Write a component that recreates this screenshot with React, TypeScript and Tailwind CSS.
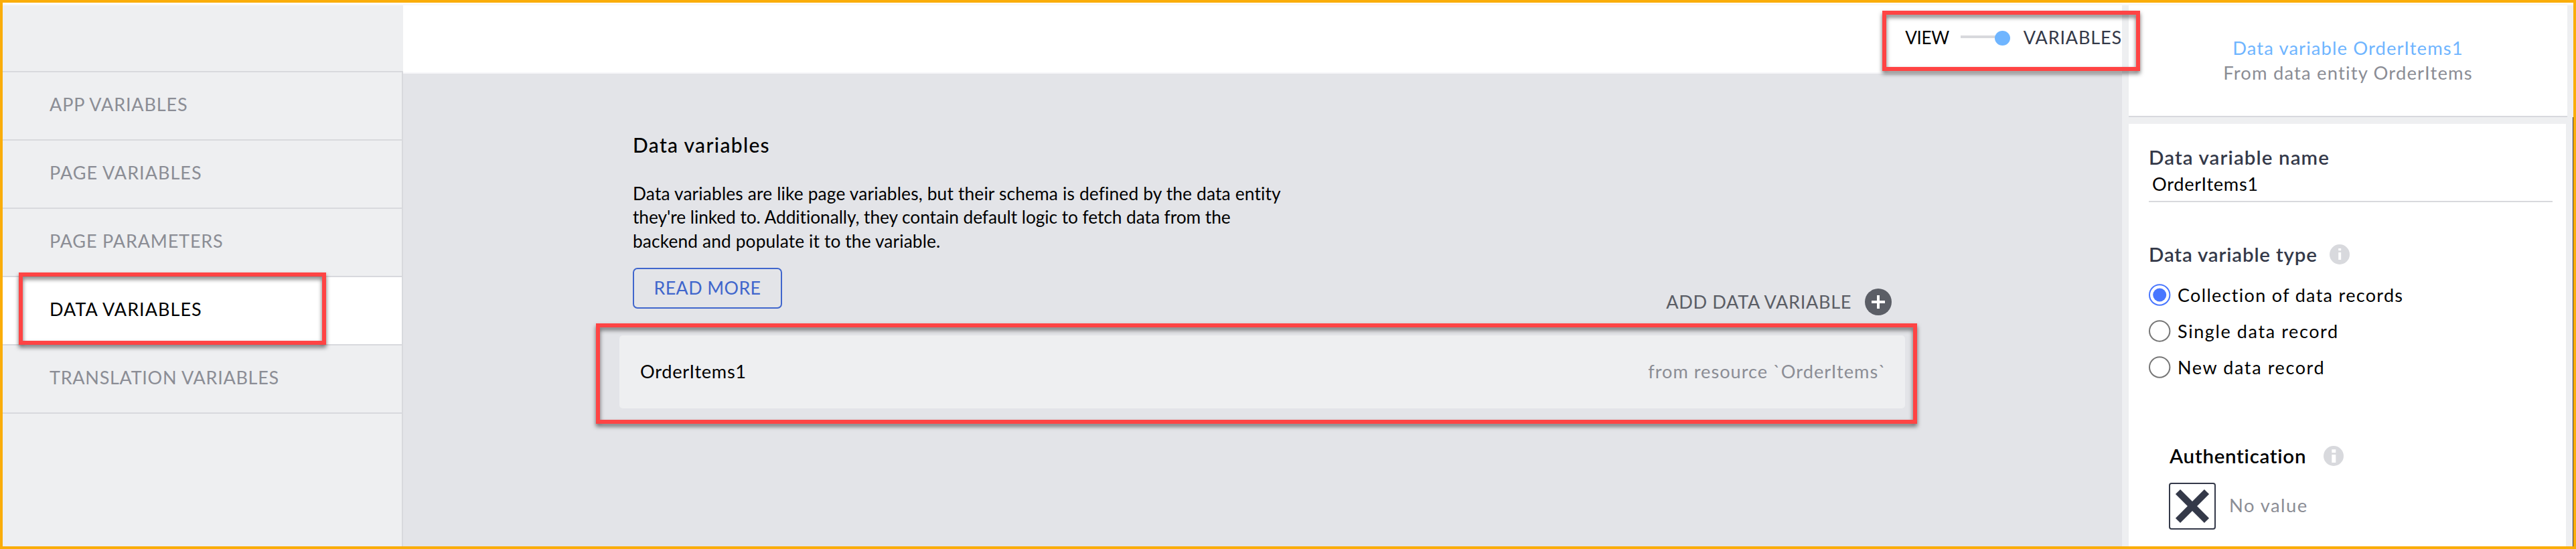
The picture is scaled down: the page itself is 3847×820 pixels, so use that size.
type NavItem = { label: string; spacing: string; active?: boolean };

const NAV: NavItem[] = [
  { label: "APP VARIABLES", spacing: "tracking-[0.86px]" },
  { label: "PAGE VARIABLES", spacing: "tracking-[1.02px]" },
  { label: "PAGE PARAMETERS", spacing: "tracking-[0.84px]" },
  { label: "DATA VARIABLES", spacing: "tracking-[1.04px]", active: true },
  { label: "TRANSLATION VARIABLES", spacing: "tracking-[0.72px]" },
];

const TYPES = [
  { label: "Collection of data records", spacing: "tracking-[1.31px]", checked: true },
  { label: "Single data record", spacing: "tracking-[1.6px]", checked: false },
  { label: "New data record", spacing: "tracking-[1.6px]", checked: false },
];

function InfoIcon({ bold = false }: { bold?: boolean }) {
  return (
    <svg width="30" height="30" viewBox="0 0 30 30" className="shrink-0">
      <circle cx="15" cy="15" r="15" fill="#d8d9dd" />
      {bold ? (
        <path d="M12.300 5.300h6v5h-6zM12.300 13h6v12h-6z" fill="#fff" />
      ) : (
        <path d="M13.200 6h4v3.300h-4zM13.200 12h4v11h-4z" fill="#fff" />
      )}
    </svg>
  );
}

function Radio({ checked }: { checked: boolean }) {
  return (
    <svg width="33" height="33" viewBox="0 0 33 33" className="shrink-0">
      <circle cx="16.2" cy="16.5" r="15.2" fill="#fff" stroke={checked ? "#4876ff" : "#767676"} strokeWidth="2" />
      {checked && <circle cx="16.2" cy="16.5" r="10" fill="#4876ff" />}
    </svg>
  );
}

function Highlight({ className }: { className: string }) {
  return (
    <div
      className={`pointer-events-none absolute border-[6px] border-[#ff4444] drop-shadow-[0_4px_3px_rgba(0,0,0,0.55)] ${className}`}
    />
  );
}

function Sidebar() {
  return (
    <aside className="flex w-[598px] shrink-0 flex-col bg-[#eeeff1]">
      <div className="h-[98px]" />
      <nav className="flex grow flex-col border-r-2 border-[#d8d9dd]">
        {NAV.map((n) => (
          <div
            key={n.label}
            className={`flex h-[102px] items-center border-t-2 border-[#d8d9dd] pb-1 pl-[70px] text-[27px] leading-9 ${n.spacing} ${
              n.active ? "bg-white text-black" : "text-[#8b8d95]"
            }`}
          >
            {n.label}
          </div>
        ))}
        <div className="border-t-2 border-[#d8d9dd]" />
      </nav>
    </aside>
  );
}

function Main() {
  return (
    <main className="flex w-[2567px] shrink-0 flex-col bg-[#e3e4e8]">
      <header className="flex h-[102px] items-start justify-end border-b-2 border-[#f7f7f9] bg-white pt-[30px] leading-9">
        <span className="text-[26px] tracking-[-0.3px] text-black">VIEW</span>
        <svg width="74" height="22" viewBox="0 0 74 22" className="mt-2 mr-[20px] ml-[17px]">
          <rect x="0" y="7" width="60" height="4" fill="#d8d9dd" />
          <ellipse cx="62.5" cy="11" rx="11.5" ry="11" fill="#6fb5ff" />
        </svg>
        <span className="text-[27px] tracking-[0.86px] text-[#343949]">VARIABLES</span>
      </header>
      <section className="flex flex-col pt-[88px] pl-[343px]">
        <h1 className="text-[30px] leading-9 font-medium tracking-[1.33px] text-black">Data variables</h1>
        <p className="mt-[38px] text-[26.3px] leading-[35.33px] whitespace-nowrap text-black">
          <span className="block tracking-[0.16px]">
            Data variables are like page variables, but their schema is defined by the data entity
          </span>
          <span className="block tracking-[-0.06px]">
            they're linked to. Additionally, they contain default logic to fetch data from the
          </span>
          <span className="block tracking-[0.13px]">backend and populate it to the variable.</span>
        </p>
        <div className="mt-[22px] flex h-[101px] w-[1880px] items-start justify-between">
          <button className="flex h-[61px] w-[223px] items-center justify-center rounded-[7px] border-2 border-[#4066cc] pb-px text-[26.8px] leading-9 tracking-[0.41px] text-[#4066cc]">
            READ MORE
          </button>
          <div className="mt-[31px] flex items-center gap-5 text-[27.2px] leading-9 tracking-[0.6px] text-[#5b5e66]">
            ADD DATA VARIABLE
            <svg width="40" height="40" viewBox="0 0 40 40">
              <circle cx="20" cy="20" r="20" fill="#5b5e66" />
              <path d="M10 20h20M20 10v20" stroke="#fff" strokeWidth="4" />
            </svg>
          </div>
        </div>
        <div className="-ml-5 flex h-[109px] w-[1920px] items-center justify-between rounded-[5px] bg-[#eeeff1] pr-[28px] pl-[31px] text-[27.2px] leading-9">
          <span className="tracking-[0.69px] text-black">OrderItems1</span>
          <span className="tracking-[0.98px] text-[#8b8d95]">from resource `OrderItems`</span>
        </div>
      </section>
    </main>
  );
}

function Properties() {
  return (
    <aside className="flex grow flex-col bg-[#eeeff1] pl-[10px]">
      <div className="flex h-[167px] w-[655px] flex-col items-center border-b-2 border-[#d8d9dd] bg-white pt-[46px] text-[27.4px] leading-[36.5px]">
        <span className="tracking-[1.1px] text-[#6fb5ff]">Data variable OrderItems1</span>
        <span className="tracking-[1.18px] text-[#8b8d95]">From data entity OrderItems</span>
      </div>
      <div className="flex grow border-r border-[#343949]">
        <div className="mt-[10px] flex w-[653px] flex-col bg-white pt-8 pl-[30px] leading-9">
          <label className="text-[29.5px] font-semibold tracking-[1.1px] text-[#343949]">Data variable name</label>
          <div className="mt-1 w-[603px] border-b-2 border-[#d8d9dd] pb-[7px] pl-[5px] text-[27.2px] tracking-[0.69px] text-black">
            OrderItems1
          </div>
          <div className="mt-[60px] flex items-center text-[29.5px] font-semibold tracking-[0.81px] text-[#343949]">
            <span className="w-[270px] whitespace-nowrap">Data variable type</span>
            <InfoIcon />
          </div>
          <div className="mt-[15px] flex flex-col text-[27px] text-black">
            {TYPES.map((t) => (
              <div key={t.label} className={`flex h-[54px] items-center gap-[10px] ${t.spacing}`}>
                <Radio checked={t.checked} />
                <span className="pt-px">{t.label}</span>
              </div>
            ))}
          </div>
          <div className="mt-[88px] ml-[31px] flex items-center text-[29.5px] font-semibold tracking-[0.72px] text-black">
            <span className="w-[230px] whitespace-nowrap">Authentication</span>
            <InfoIcon bold />
          </div>
          <div className="mt-[22px] ml-[30px] flex items-center gap-5">
            <div className="flex size-[70px] items-center justify-center rounded-[4px] border-2 border-[#343949]">
              <svg width="52" height="52" viewBox="0 0 52 52" className="shrink-0">
                <path d="M4.500 4.500L47.500 47.500M47.500 4.500L4.500 47.500" stroke="#343949" strokeWidth="10" />
              </svg>
            </div>
            <span className="pb-[3px] text-[27.4px] tracking-[1.46px] text-[#8b8d95]">No value</span>
          </div>
        </div>
      </div>
    </aside>
  );
}

export default function App() {
  return (
    <div className="relative flex h-[820px] w-[3847px] flex-col overflow-hidden border-4 border-[#faad0a] bg-white font-['Lato','Liberation_Sans',sans-serif]">
      <div className="mt-0.5 h-0.5 shrink-0 bg-[#f7f7f9]" />
      <div className="flex h-[808px] shrink-0">
        <Sidebar />
        <Main />
        <Properties />
      </div>
      <Highlight className="top-[403px] left-[24px] h-[108px] w-[459px]" />
      <Highlight className="top-[479px] left-[886px] h-[150px] w-[1973px]" />
      <Highlight className="top-[12px] left-[2807px] h-[90px] w-[385px]" />
    </div>
  );
}
